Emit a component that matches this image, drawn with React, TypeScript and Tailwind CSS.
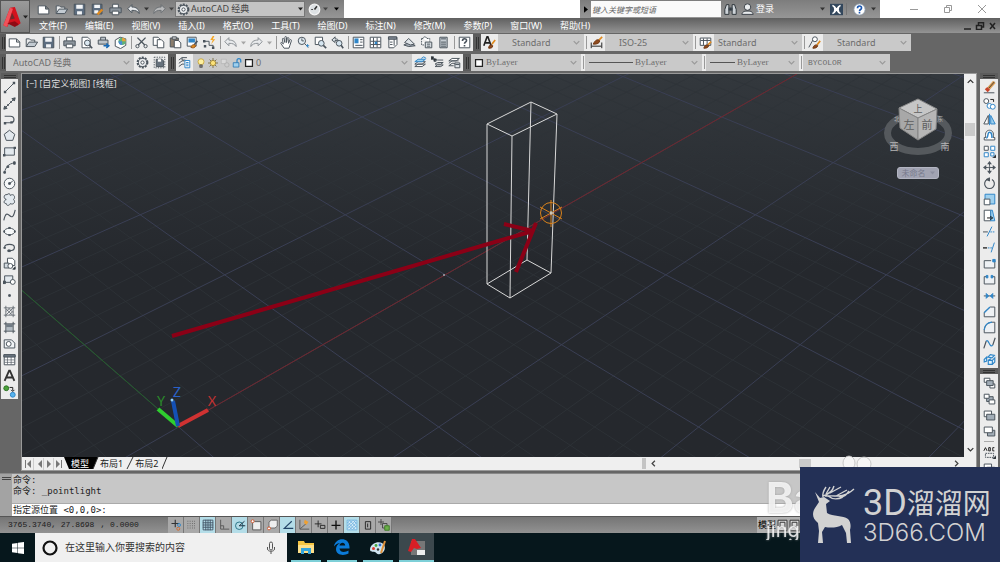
import classNames from "clsx";
import type { ReactNode } from "react";

const K = "#4b545d";
const B = "#2f86c8";
const L = "#9fd0ee";
const O = "#e08a1e";

// All glyphs are drawn on a 16 x 16 box
const glyphs: Record<string, ReactNode> = {
  new: <path d="M1.500 3.500h9l4 4v6h-13zM10.500 3.500v4h4" fill="#fff" />,
  open: (
    <>
      <path d="M1.500 13V3.500h4l1.500 1.500h5v3" fill="#e8eaec" />
      <path d="M1.500 13l3.500-5.500h10.500L12 13z" fill="#c3cbd2" />
    </>
  ),
  save: (
    <>
      <path d="M1.500 1.500h13v13h-13z" fill="#5c6d80" />
      <path d="M4 2h8v5H4zM5 10h6v4H5z" fill="#f3f5f7" stroke="none" />
    </>
  ),
  saveas: (
    <>
      <path d="M1.500 1.500h12v12h-12z" fill="#5c6d80" />
      <path d="M4 2h7v4H4zM4 9h5v4H4z" fill="#f3f5f7" stroke="none" />
      <path d="M8 14l6-6" stroke={O} strokeWidth="3" />
    </>
  ),
  print: (
    <>
      <path d="M4.500 6V1.500h7V6" fill="#fff" />
      <path d="M1 6h14v6H1z" fill="#8c959d" />
      <path d="M4 10h8v4.500H4z" fill="#fff" />
    </>
  ),
  preview: (
    <>
      <path d="M2.500 1.500h7l3 3v10h-10z" fill="#fff" />
      <circle cx="9" cy="8.500" r="3.500" fill="#dce9f2" />
      <path d="M11.500 11l3.500 4" strokeWidth="2" />
    </>
  ),
  publish: (
    <>
      <path d="M4.500 5V1.500h6V5M1.500 5h12v5h-12z" fill="#bcc3c9" />
      <path d="M8 12h5M11.500 9.500l3 2.500-3 2.500" stroke="#1668b4" strokeWidth="2" />
    </>
  ),
  cube3d: (
    <>
      <path d="M1.500 5l6-3.500 7 2v8l-6.500 4-6.500-3z" fill="#fff" />
      <circle cx="10" cy="6.500" r="4.500" fill="#5fb37a" stroke="none" />
      <path d="M10 6.500V2a4.500 4.500 0 0 1 4.500 4.500z" fill="#e7a13b" stroke="none" />
      <path d="M10 6.500H5.500A4.500 4.500 0 0 0 10 11z" fill="#4b8bd6" stroke="none" />
    </>
  ),
  cut: (
    <>
      <path d="M3 2l9 9M13 2L4 11" strokeWidth="1.600" />
      <circle cx="3" cy="12.500" r="2" />
      <circle cx="13" cy="12.500" r="2" />
    </>
  ),
  copy: (
    <>
      <path d="M1.500 1.500h6l2 2v8h-8z" fill="#fff" />
      <path d="M6.500 4.500h5l3 3v7h-8z" fill="#fff" />
    </>
  ),
  paste: (
    <>
      <path d="M1.500 2.500h10v11h-10z" fill="#8a7d6d" />
      <path d="M4 1h5v3H4z" fill="#ccc" />
      <path d="M6.500 5.500h5l3 3v6h-8z" fill="#fff" />
    </>
  ),
  match: (
    <>
      <path d="M1.500 1.500h11v11h-11z" fill="#fff" />
      <path d="M3 3h8v5H3z" fill={B} stroke="none" />
      <path d="M14 6l-4 5" stroke={K} strokeWidth="2" />
      <path d="M6 14c1-4 5-4 6-2-1 3-4 3-6 2z" fill={O} stroke="#94541a" />
    </>
  ),
  block: (
    <>
      <path d="M1.500 6.500h6v5h5v3" />
      <path d="M12 0l-3 5h3l-2 5 5-6h-3l2-4z" fill="#f5a623" stroke="none" />
      <path d="M0 5h3v3H0zM1 11h3v3H1zM11 13h3v3h-3z" fill={K} stroke="none" />
    </>
  ),
  undo: <path d="M1 7l5-5v3c5 0 9 2 9 8-2-3-4-4-9-4v3z" fill="#e6e9ec" />,
  redo: <path d="M15 7l-5-5v3c-5 0-9 2-9 8 2-3 4-4 9-4v3z" fill="#e6e9ec" />,
  pan: (
    <path
      d="M5 15L1 9c0-2 2-1 3 1L3 4c0-2 2-1 2 0l1 4V2c0-2 2-2 2 0v6l1-5c0-2 2-1 2 0l-.5 6L12 5c1-1 2-1 2 1l-2 6-1 3z"
      fill="#fff"
    />
  ),
  zoom: (
    <>
      <circle cx="6" cy="6" r="4.500" fill="#e4edf3" />
      <path d="M6 3v3h2.500M9.500 9.500L14 14" />
      <path d="M11 12h4M13 10v4" stroke={B} />
    </>
  ),
  zoomwin: (
    <>
      <path d="M1.500 1.500h9v9h-9z" fill="#fff" />
      <circle cx="9" cy="9" r="3.500" fill="#d5e5f0" />
      <path d="M11.500 11.500L15 15" strokeWidth="2" />
    </>
  ),
  zoomprev: (
    <>
      <path d="M1 5l4-4v2.500c3 0 4 1 5 3-2-1-3-1-5-1V8z" fill="#dce3e8" />
      <circle cx="10" cy="9" r="3.500" fill="#d5e5f0" />
      <path d="M12.500 11.500L15 15" strokeWidth="2" />
    </>
  ),
  props: (
    <>
      <path d="M1.500 1.500h13v13h-13z" fill="#fff" />
      <path d="M3 3h5v6H3z" fill={B} stroke="none" />
      <path d="M10 4.500h3M10 7.500h3M4 11.500h9" />
    </>
  ),
  dcenter: (
    <>
      <path d="M1.500 1.500h13v13h-13zM5.500 2v12M2 6.500h12M2 10.500h12M10 2v12" fill="#fff" />
      <path d="M7 7h3v3H7z" fill={B} stroke="none" />
    </>
  ),
  palette: (
    <>
      <path d="M3.500 1.500h10v9l-4 4h-6z" fill="#fff" />
      <path d="M3 1h10v3H3zM10 4v8M5 7.500h3M5 10.500h3" fill="#808a94" />
    </>
  ),
  sheet: (
    <>
      <path d="M1 11l6 2 8-1-7-4z" fill="#a9b2ba" />
      <path d="M2 8L7 3l7 7-5 1z" fill="#dfe4e8" />
    </>
  ),
  markup: (
    <>
      <path d="M2 3h2l1-2h2l1 2h4v4M2 3v8h4" fill="#fff" strokeDasharray="2 1" />
      <path d="M6.500 7.500h8v7h-8zM8.500 10h4M8.500 12.500h4" fill="#dfe4e8" />
    </>
  ),
  calc: (
    <>
      <path d="M3.500 1.500h9v13h-9z" fill="#c5ccd2" />
      <path d="M5 3.500h6M5 7.500h6M5 10h6M5 12.500h6" />
    </>
  ),
  help: (
    <>
      <path d="M1.500 1.500h13v13h-13z" fill="#fff" />
      <path d="M5.500 6c0-3.500 5-3.500 5-.5 0 2-2.500 2-2.500 4M8 11v2" strokeWidth="2" />
    </>
  ),
  textstyle: (
    <>
      <path d="M1 12L5 1h1l4 11M2.500 8.500h6" strokeWidth="2" stroke="#222" />
      <path d="M15 5l-4 5" strokeWidth="2" stroke={O} />
      <path d="M7 15c0-4 3-5 5-3 0 3-3 3-5 3z" fill="#8f4a1d" stroke="#703814" />
    </>
  ),
  dimstyle: (
    <>
      <path d="M1.500 8v7M14.500 8v7M2 12.500h12" stroke="#222" />
      <path d="M15 1l-4 4" strokeWidth="2" stroke={O} />
      <path d="M4 10c2-5 6-7 8-4-1 4-5 4-8 4z" fill="#8f4a1d" stroke="#703814" />
    </>
  ),
  tablestyle: (
    <>
      <path d="M1.500 2.500h13v9h-13zM2 5.500h12M5.500 3v8M10 3v8" fill="#fff" />
      <path d="M15 7l-4 4" strokeWidth="2" stroke={O} />
      <path d="M6 15c1-4 4-5 6-3-1 3-4 3-6 3z" fill="#8f4a1d" stroke="#703814" />
    </>
  ),
  leader: (
    <>
      <path d="M1 14L6 5" />
      <circle cx="8.500" cy="4" r="3" fill="#fff" />
      <path d="M15 6l-4 5" strokeWidth="2" stroke={O} />
      <path d="M6 15c1-4 4-5 6-3-1 3-4 3-6 3z" fill="#8f4a1d" stroke="#703814" />
    </>
  ),
  gear: (
    <>
      <circle cx="8" cy="8" r="6" strokeDasharray="2.500 1.300" strokeWidth="2.500" />
      <circle cx="8" cy="8" r="5" fill="#eef0f2" />
      <circle cx="8" cy="8" r="2" fill="#fff" />
    </>
  ),
  wsave: (
    <>
      <path d="M1.500 1.500h13v13h-13z" strokeDasharray="1.500 1.500" />
      <path d="M4 4h7l2 2v7H4z" fill="#66717c" />
      <path d="M6 4h4v3H6z" fill="#fff" stroke="none" />
    </>
  ),
  layers: (
    <>
      <path d="M1 5l4-3h6M1 9l4-3h3M1 13l4-3h3M5 2v3h4" />
      <path d="M8.500 5.500h6v9h-6zM10 8h3M10 10h3M10 12h3" fill="#fff" stroke={B} />
    </>
  ),
  stack: (
    <>
      <path d="M1 13l4-3h9l-4 3zM1 10l4-3h9l-4 3z" fill="#fff" />
      <path d="M1 7l4-3h9l-4 3z" fill={L} stroke={B} />
      <path d="M9 3l3-2 3 2" stroke={B} />
    </>
  ),
  laymatch: (
    <>
      <path d="M5 13l3-2h7l-3 2zM5 10l3-2h7l-3 2zM5 7l3-2h7" fill="#fff" />
      <path d="M0 1h3v3H0zM3 3l4 1-3 3z" fill="#222" />
    </>
  ),
  laystate: (
    <>
      <path d="M1 12l4-3h4M1 9l4-3h8M1 6l4-3h9l-4 3zM1 12h6" fill="#fff" />
      <path d="M8.500 8.500h6v6h-6zM9 10.500h5" fill="#dfe4e8" />
    </>
  ),
  bulb: (
    <>
      <circle cx="8" cy="6" r="4.800" fill="#fdf0a0" stroke="#c29b2a" />
      <path d="M6 11h4v4H6z" fill="#777" stroke="#555" />
    </>
  ),
  sun: (
    <>
      <path d="M8 0v16M0 8h16M2.500 2.500l11 11M13.500 2.500l-11 11" stroke="#6a5b2c" />
      <circle cx="8" cy="8" r="4.200" fill="#fbe27a" stroke="#9b7e26" />
    </>
  ),
  freeze: (
    <>
      <path d="M2 2h8v7H2z" fill="#d9d9d9" stroke="#b3b3b3" />
      <circle cx="11" cy="11" r="3.500" fill="#ccc" stroke="#aaa" />
    </>
  ),
  lock: (
    <>
      <path d="M8 8V4c0-4 6-4 6 0v3" strokeWidth="2" stroke={B} />
      <path d="M2 7.500h9v7H2z" fill={L} stroke="#1f6fae" />
    </>
  ),
  swatch: <path d="M2.500 2.500h11v11h-11z" fill="#fff" stroke="#222" strokeWidth="2" />,
  line: (
    <>
      <path d="M2.500 13.500l11-11" />
      <path d="M1 12h3v3H1zM12 1h3v3h-3z" fill={K} stroke="none" />
    </>
  ),
  xline: (
    <>
      <path d="M2 14L14 2" />
      <path d="M15 1l-4 1 3 3zM1 15l4-1-3-3z" fill={K} />
      <path d="M5 9h2v2H5zM9 5h2v2H9z" fill={K} stroke="none" />
    </>
  ),
  pline: (
    <>
      <path d="M2 4h7c6 0 6 8 0 8H2" strokeWidth="1.500" />
      <path d="M1 11h3v3H1zM9 10h3v3H9z" fill={K} stroke="none" />
    </>
  ),
  polygon: <path d="M8 1.500l6.500 5-2.500 7.500H4L1.500 6.500z" fill="#e3e9ee" />,
  rect: (
    <>
      <path d="M2 3.500h12v9H2z" fill="#e3e9ee" />
      <path d="M0 11h3v3H0zM13 2h3v3h-3z" fill={K} stroke="none" />
    </>
  ),
  arc: (
    <>
      <path d="M2 14C3 8 7 3 14 2.500" />
      <path d="M1 13h2v2H1zM5 6h2v2H5zM13 1h2v3h-2z" fill={K} />
    </>
  ),
  circle: (
    <>
      <circle cx="8" cy="8" r="6.500" fill="#f6f8f9" />
      <path d="M8 8l4-3" />
      <path d="M7 7h2v2H7z" fill={K} />
    </>
  ),
  cloud: (
    <path
      d="M4 8C0 7 1 1 5 2c2-2 4-1 4 1 4-3 7 2 4 5 3 3 0 7-4 5-1 3-5 3-5 0-4 0-3-4 0-5z"
      fill="#e3e9ee"
    />
  ),
  spline: <path d="M1 14c2-9 4-9 7-6s5 2 7-7" strokeWidth="1.400" />,
  ellipse: (
    <>
      <ellipse cx="8" cy="8" rx="6.500" ry="4" fill="#f6f8f9" />
      <path d="M1 7h1v2H1zM14 7h1v2h-1zM7 3h2v1H7zM7 12h2v1H7z" fill={K} />
    </>
  ),
  earc: (
    <>
      <path d="M2 8c0-5 12-5 12 0 0 3-3 4-6 4" strokeWidth="1.500" />
      <path d="M1 8h2v1H1zM6 11h3v2H6z" fill={K} />
    </>
  ),
  insert: (
    <>
      <path d="M5.500 1.500h6l3 3v6h-9z" fill="#fff" />
      <path d="M1.500 7.500h6v6h-6z" fill="#d5dce2" />
      <circle cx="9" cy="11" r="3" fill="#fff" />
      <path d="M12 15h3v-3z" fill="#111" />
    </>
  ),
  mkblock: (
    <>
      <path d="M2 3.500h10v8H2z" fill="#e3e9ee" />
      <path d="M0 10h3v3H0z" fill={K} />
      <circle cx="12" cy="11" r="3" fill="#fff" />
    </>
  ),
  point: <path d="M7 7h2v2H7z" fill={K} />,
  hatch: (
    <path
      d="M3.500 1v14M12.500 1v14M1 3.500h14M1 12.500h14M4 8l4-4M4 12l8-8M8 12l4-4M4 5l7 7M7 4l5 5"
      strokeWidth="0.900"
    />
  ),
  gradient: (
    <>
      <path d="M4 4h8v4H4z" fill="#707b85" stroke="none" />
      <path d="M4 8h8v4H4z" fill="#b3bcc4" stroke="none" />
      <path d="M3.500 1v14M12.500 1v14M1 3.500h14M1 12.500h14" />
    </>
  ),
  region: (
    <>
      <path d="M1.500 3.500h9l4 4v6h-13z" fill="#f1f4f6" />
      <circle cx="7" cy="8.500" r="3" fill="#fff" />
    </>
  ),
  table: (
    <>
      <path d="M1.500 2.500h13v12h-13z" fill="#fff" />
      <path d="M1 2h14v3H1z" fill="#6b7680" />
      <path d="M2 8.500h12M2 11.500h12M5.500 5v9M10 5v9" strokeWidth="0.800" />
    </>
  ),
  mtext: <path d="M2 14.500L7.500 2h1L14 14.500M4 10.500h8" strokeWidth="2.300" stroke="#333" />,
  addsel: (
    <>
      <circle cx="4" cy="4" r="3" fill="#4ba23b" stroke="#2f7425" />
      <circle cx="12" cy="12" r="3" fill="#58b4ee" stroke={B} />
      <path d="M8 3h4v4M10 6l2 2 2-2" stroke="#222" />
    </>
  ),
  erase: (
    <>
      <path d="M14 1L7 9" strokeWidth="4" stroke="#d99c53" />
      <path d="M14 1L7 9" strokeWidth="1" stroke="#333" />
      <path d="M7 9l-3 3" strokeWidth="5" stroke="#c8432a" />
      <path d="M1 14.500h13" />
    </>
  ),
  copyobj: (
    <>
      <circle cx="4" cy="5" r="3" fill="#fff" />
      <path d="M9 3h4v3" stroke="#222" />
      <circle cx="8" cy="11" r="3" stroke={B} fill="#fff" />
      <circle cx="12" cy="12" r="3" stroke={B} fill="#fff" />
    </>
  ),
  mirror: (
    <>
      <path d="M1 13.500L6.500 3v10.500z" fill="#fff" />
      <path d="M8 1v14" stroke={B} />
      <path d="M15 13.500L9.500 3v10.500z" fill={L} stroke={B} />
    </>
  ),
  offset: (
    <>
      <path d="M1.500 13.500v-3h2C2 4 5 1.500 8 1.500S14 4 12.500 10.500h2v3z" fill="#fff" />
      <path d="M4 11c3 0 1-7 4-7s3 3 3 7" stroke={B} strokeWidth="1.800" />
    </>
  ),
  array: (
    <>
      <path d="M1.500 1.500h5v5h-5z" fill="#fff" />
      <path d="M9.500 1.500h5v5h-5zM1.500 9.500h5v5h-5zM9.500 9.500h4v4h-4z" fill="#fff" stroke={B} />
      <path d="M12 16h4v-4z" fill="#111" />
    </>
  ),
  move: (
    <>
      <path d="M8 2v12M2 8h12" strokeDasharray="4 3" />
      <path d="M8 0l3 4H5zM8 16l3-4H5zM0 8l4-3v6zM16 8l-4-3v6z" fill={K} stroke="none" />
      <circle cx="8" cy="8" r="1" fill={K} />
    </>
  ),
  rotate: (
    <>
      <path d="M5 3a6 6 0 1 0 6 0" strokeWidth="1.400" />
      <path d="M4 3l4-2v4z" fill={K} />
    </>
  ),
  scale: (
    <>
      <path d="M2.500 1.500h12v12h-12z" fill={L} stroke={B} />
      <path d="M1.500 7.500h7v7h-7z" fill="#fff" />
    </>
  ),
  stretch: (
    <>
      <path d="M1.500 1.500h8v13h-8z" fill="#fff" />
      <path d="M9.500 1.500h2l3 13h-5z" fill={L} stroke={B} />
      <path d="M5 11h5M9 9l3 2-3 2" stroke="#111" />
    </>
  ),
  trim: (
    <>
      <path d="M5 14L11 2" stroke={B} />
      <path d="M0 8.500h6" />
      <path d="M9 8.500h6" stroke={B} strokeDasharray="2 1" />
    </>
  ),
  extend: (
    <>
      <path d="M10 14l4-12" stroke={B} />
      <path d="M0 8.500h5" stroke="#111" strokeWidth="1.500" />
      <path d="M6 8.500h6" stroke={B} strokeDasharray="2 1" />
    </>
  ),
  breakpt: (
    <>
      <path d="M14.500 5v8.500h-13v-9H10" fill="#eef1f4" />
      <path d="M12 3h3v3h-3z" fill={B} stroke={B} />
    </>
  ),
  breakln: (
    <>
      <path d="M5 4.500H1.500v9h13v-9H11" fill="#eef1f4" />
      <path d="M4 3h2v3H4zM10 3h2v3h-2z" fill={B} stroke={B} />
    </>
  ),
  join: (
    <>
      <path d="M1 8.500h14" />
      <path d="M4 5.500l3 3-3 3zM12 5.500l-3 3 3 3z" fill={B} stroke={B} />
    </>
  ),
  chamfer: (
    <>
      <path d="M1.500 9v5.500h13v-12H9z" fill="#eef1f4" />
      <path d="M1.500 9.500l7-7" stroke={B} strokeWidth="1.500" />
    </>
  ),
  fillet: (
    <>
      <path d="M1.500 11v3.500h13v-13H11C5 2 2 6 1.500 11z" fill="#eef1f4" />
      <path d="M1.500 11c.5-5 4-9 9.500-9.500" stroke={B} strokeWidth="1.500" />
    </>
  ),
  blend: (
    <>
      <path d="M1 14l3-9M12 10l3-9" strokeWidth="1.500" />
      <path d="M4 5c3-3 4 9 8 5" stroke={B} strokeWidth="1.500" />
    </>
  ),
  explode: (
    <path
      d="M1.500 8l3-3v5l-3 1zM6 5l3-3 5 1-3 3zM6.500 9h5v5h-5zM11.500 9l3-3v5l-3 3M6.500 9l3-2"
      fill="#e4f2fb"
      stroke={B}
      strokeWidth="1.400"
    />
  ),
  front: (
    <>
      <path d="M1.500 1.500h7v5h-7zM8.500 8.500h6v5h-6z" fill="#fff" />
      <path d="M4.500 4.500h8v6h-8z" fill="#a2adb7" />
    </>
  ),
  back: (
    <>
      <path d="M4.500 4.500h8v6h-8z" fill="#a2adb7" />
      <path d="M1.500 1.500h6v5h-6zM7.500 8.500h7v5h-7z" fill="#fff" />
    </>
  ),
  above: (
    <>
      <path d="M1.500 2.500h9v7h-9z" fill="#fff" />
      <path d="M4.500 6.500h10v7h-10z" fill="#a2adb7" />
    </>
  ),
  under: (
    <>
      <path d="M5.500 6.500h9v7h-9z" fill="#a2adb7" />
      <path d="M1.500 2.500h10v7h-10z" fill="#fff" />
    </>
  ),
  annofront: (
    <>
      <path d="M1 6l2-4 2 4M7 2v4M7 2h2v4H7M14 2h-2v4h2" stroke="#222" />
      <path d="M3 9h10v5H3z" strokeDasharray="2 1" />
      <path d="M12 16h4v-4z" fill="#111" />
    </>
  ),
  wheel: (
    <>
      <circle cx="8" cy="8" r="6.500" fill="#dde1e4" stroke="#f4f4f4" strokeWidth="1.500" />
      <path d="M8 8l3-4" stroke="#333" strokeWidth="2" />
      <path d="M4 8h2" stroke="#333" />
    </>
  ),
  binoculars: (
    <>
      <path d="M1 8l2-6h3v12H1zM15 8l-2-6h-3v12h5z" fill="#cdd3d8" stroke="#2e353b" />
      <path d="M6 6h4v3H6z" fill="#2e353b" />
    </>
  ),
  user: (
    <>
      <circle cx="8" cy="5" r="4" fill="#e9ecee" stroke="#3a4047" />
      <path d="M1 14c1-4 4-4 7-4s6 0 7 4z" fill="#e9ecee" stroke="#3a4047" />
    </>
  ),
  exchange: (
    <>
      <path d="M0 1h16v14H0z" fill="#33475c" stroke="none" />
      <path d="M3 3c4 2 4 8 0 10M13 3c-4 2-4 8 0 10M5 4l6 8M11 4l-6 8" stroke="#fff" strokeWidth="1.800" />
    </>
  ),
  question: (
    <>
      <circle cx="8" cy="8" r="7" fill="#fff" stroke="#8996a5" />
      <path d="M5.500 6.500c0-4 5-3.500 5-.5 0 2-2.500 2-2.500 4M8 11v2" stroke="#1b57b0" strokeWidth="2" />
    </>
  ),
  infer: (
    <>
      <path d="M7 1v10M2 6h10" stroke="#333" strokeWidth="1.500" />
      <circle cx="12" cy="8" r="2" stroke={B} />
      <circle cx="11" cy="13" r="2" stroke="#d06a2c" />
    </>
  ),
  snap: <path d="M2 3h12M2 6h12M2 9h12M2 12h12" stroke="#555" strokeDasharray="1 2" />,
  grid: <path d="M1.500 1.500h13v13h-13zM1 5h14M1 8h14M1 11h14M5 1v14M8 1v14M11 1v14" stroke="#456" />,
  ortho: <path d="M3.500 1v12.500H15M3.500 9h4v4" stroke="#555" />,
  polar: (
    <>
      <circle cx="7" cy="9" r="5" stroke="#1f6d80" />
      <path d="M7 9l7-6M7 9h8" stroke="#123" />
    </>
  ),
  osnap: (
    <>
      <path d="M3.500 3.500h11v11h-11z" fill="#eee" stroke="#555" />
      <circle cx="3.500" cy="3" r="2" fill="#fff" stroke="#d0562c" />
    </>
  ),
  osnap3d: (
    <>
      <path d="M4 4l3-2.500h8v8L12 12H4z" fill="#eee" stroke="#666" />
      <circle cx="4" cy="12.500" r="2" fill="#fff" stroke="#d0562c" />
    </>
  ),
  otrack: <path d="M13 3L3 12.500h12" stroke="#246" strokeWidth="1.500" />,
  ducs: (
    <>
      <path d="M2.500 1v12.500H15M3 13l8-7" stroke="#555" />
      <path d="M9 1l5 3-3 4-3-3z" fill="#f0a030" stroke="none" />
    </>
  ),
  dyn: <path d="M1 6.500h9M5.500 2v9M8.500 8.500h6v4h-6z" stroke="#222" />,
  lwt: <path d="M8 2v12M2 8.500h12" stroke="#111" strokeWidth="1.800" />,
  tpy: (
    <path
      d="M1.500 1.500h13v13h-13zM2 5l3-3M2 9l7-7M2 13l11-11M5 14l9-9M9 14l5-5M2 8l6 6M2 4l10 10M5 2l9 9M10 2l4 4"
      stroke="#6fb2df"
      fill="#d9edf8"
    />
  ),
  qp: <path d="M4.500 3.500h7v10h-7zM7.500 6v5" stroke="#222" />,
  sc: (
    <>
      <path d="M4 0v8M0 4h8M6 6h6v6H6z" stroke="#444" />
      <path d="M9 9h6v6H9z" fill="#6cb04a" stroke="#3d7a25" />
    </>
  ),
  layout: <path d="M2.500 1.500h11v13h-11zM5 4h6v6H5z" fill="#ddd" stroke="#333" />,
};

function Glyph({ name, className = "size-[13px]" }: { name: string; className?: string }) {
  return (
    <svg
      viewBox="0 0 16 16"
      className={classNames("shrink-0", className)}
      fill="none"
      stroke={K}
      strokeWidth="1.200"
      aria-hidden="true"
    >
      {glyphs[name]}
    </svg>
  );
}

function ToolButton({ name, className = "h-full w-[17px]" }: { name: string; className?: string }) {
  return (
    <button
      type="button"
      aria-label={name}
      className={classNames("flex shrink-0 items-center justify-center", className)}
    >
      <Glyph name={name} />
    </button>
  );
}

function Drop({ className = "text-[#222]" }: { className?: string }) {
  return (
    <svg viewBox="0 0 8 5" className={classNames("h-1 w-[5px] shrink-0", className)} aria-hidden="true">
      <path d="M0 0h8L4 5z" fill="currentColor" />
    </svg>
  );
}

function Chevron({ dir = "down", className = "text-[#9a9a9a]" }: { dir?: "down" | "up" | "left" | "right"; className?: string }) {
  const shapes = {
    down: "M1 3l4 4 4-4",
    up: "M1 7l4-4 4 4",
    left: "M7 1L3 5l4 4",
    right: "M3 1l4 4-4 4",
  };
  return (
    <svg viewBox="0 0 10 10" className={classNames("size-[7px] shrink-0", className)} aria-hidden="true">
      <path d={shapes[dir]} fill="none" stroke="currentColor" strokeWidth="1.800" />
    </svg>
  );
}

interface ComboProps {
  label: string;
  value: string;
  className: string;
  textClass?: string;
  children?: ReactNode;
}

function Combo({ label, value, className, textClass = "text-[9px]", children }: ComboProps) {
  return (
    <div className={classNames("flex h-full items-center gap-[2px] bg-[#c9c9c9] pr-1 text-[#6c6c6c]", className)}>
      {children}
      <select aria-label={label} className={classNames("h-full min-w-0 flex-1 appearance-none bg-transparent", textClass)}>
        <option>{value}</option>
      </select>
      <Chevron />
    </div>
  );
}

function Grip({ className = "w-[6px]" }: { className?: string }) {
  return (
    <div className={classNames("flex h-full shrink-0 items-center justify-center gap-px bg-[#5c5c5c]", className)}>
      <span className="h-3 w-px bg-[#333]" />
      <span className="h-3 w-px bg-[#333]" />
    </div>
  );
}

function Divider() {
  return (
    <div className="flex h-full w-1 shrink-0 items-center justify-center">
      <span className="h-[13px] w-px bg-[#999]" />
    </div>
  );
}

function DropCell() {
  return (
    <span className="flex w-[9px] justify-center">
      <Drop className="text-[#777]" />
    </span>
  );
}

const menus = [
  "文件(F)", "编辑(E)", "视图(V)", "插入(I)", "格式(O)", "工具(T)",
  "绘图(D)", "标注(N)", "修改(M)", "参数(P)", "窗口(W)", "帮助(H)",
];

function TitleBar() {
  return (
    <header className="flex">
      <button
        type="button"
        aria-label="菜单浏览器"
        className="flex w-[30px] shrink-0 items-center gap-px border border-[#555] bg-linear-to-b from-[#9a9a9a] to-[#7b7b7b] pl-px"
      >
        <svg viewBox="0 0 20 26" className="h-[25px] w-5" aria-hidden="true">
          <path d="M1 22L8 4l5-1 6 17-4 3-2-4-6 1-2 4z" fill="#d3121d" />
          <path d="M1 22L8 4l3 1-5 15-1 4z" fill="#f0525a" />
          <path d="M10 9l3 6-5 1z" fill="#6b2a2a" />
          <path d="M5 20l8-2 4 3-4 3z" fill="#8e0b14" />
        </svg>
        <Drop />
      </button>
      <div className="flex min-w-0 flex-1 flex-col">
        <div className="flex h-[18px] bg-white">
          <div className="flex items-center bg-linear-to-b from-[#7d7d7d] to-[#969696] pl-1">
            {["new", "open", "save", "saveas", "print", "undo"].map((name) => (
              <ToolButton key={name} name={name} className="h-full w-[18px]" />
            ))}
            <span className="flex w-2 justify-center">
              <Drop className="text-[#333]" />
            </span>
            <span className="flex opacity-50">
              <ToolButton name="redo" className="h-full w-[18px]" />
            </span>
            <span className="flex w-[7px] justify-center">
              <Drop className="text-[#444]" />
            </span>
            <div className="flex h-4 w-[130px] items-center gap-px border border-[#777] bg-[#c4c4c4] px-px">
              <Glyph name="gear" />
              <select aria-label="工作空间" className="min-w-0 flex-1 appearance-none bg-transparent text-[9px] text-[#444]">
                <option>AutoCAD 经典</option>
              </select>
              <Drop />
            </div>
            <ToolButton name="wheel" className="h-full w-[18px]" />
            <Drop className="text-[#444]" />
            <span className="flex w-4 justify-center">
              <Drop className="text-black" />
            </span>
          </div>
          <div className="flex-1" />
          <div className="flex items-center bg-linear-to-b from-[#7d7d7d] to-[#969696]">
            <span className="flex w-[11px] justify-center">
              <svg viewBox="0 0 5 8" className="h-[7px] w-1" aria-hidden="true">
                <path d="M0 0v8l5-4z" />
              </svg>
            </span>
            <input
              aria-label="搜索"
              placeholder="键入关键字或短语"
              className="h-4 w-[130px] bg-[#fafafa] px-px text-[8px] italic placeholder:text-[#666]"
            />
            <ToolButton name="binoculars" className="h-full w-[18px]" />
            <ToolButton name="user" className="h-full w-[17px]" />
            <a href="#login" className="w-[62px] text-[9px] text-white">登录</a>
            <span className="flex w-2 justify-center">
              <Drop className="text-[#333]" />
            </span>
            <ToolButton name="exchange" className="h-full w-5" />
            <span className="h-3 w-px bg-[#777]" />
            <ToolButton name="question" className="h-full w-6" />
            <span className="flex w-[9px]">
              <Drop className="text-[#333]" />
            </span>
          </div>
          <div className="flex w-[120px] items-center justify-between pr-[14px] pl-[30px] text-[#999]">
            <button type="button" aria-label="最小化">
              <svg viewBox="0 0 8 8" className="size-2" fill="none" stroke="currentColor">
                <path d="M0 4.500h8" />
              </svg>
            </button>
            <button type="button" aria-label="还原">
              <svg viewBox="0 0 8 8" className="size-2" fill="none" stroke="currentColor">
                <path d="M.5 2.500h5v5h-5zM2.500 2V.5h5v5H6" />
              </svg>
            </button>
            <button type="button" aria-label="关闭">
              <svg viewBox="0 0 8 8" className="size-2" fill="none" stroke="currentColor">
                <path d="M0 0l8 8M8 0L0 8" />
              </svg>
            </button>
          </div>
        </div>
        <nav className="flex h-[15px] items-center justify-between bg-linear-to-b from-[#606060] to-[#949494] pr-1 pl-[9px]">
          <div className="flex gap-[18px] text-[9px] leading-[15px] text-white">
            {menus.map((menu) => (
              <button key={menu} type="button" className="whitespace-nowrap">
                {menu}
              </button>
            ))}
          </div>
          <svg viewBox="0 0 32 8" className="h-2 w-8" fill="none" stroke="#222" strokeWidth="1.500" aria-hidden="true">
            <path d="M0 7h7M12.500 3.500h5v4h-5zM14.500 3V.7h5v4.300H18M26 1l5 6M31 1l-5 6" />
          </svg>
        </nav>
      </div>
    </header>
  );
}

function StandardToolbar() {
  return (
    <div className="flex h-[17px] w-fit bg-[#ececec]">
      <Grip />
      {["new", "open", "save"].map((n) => <ToolButton key={n} name={n} />)}
      <Divider />
      {["print", "preview", "publish", "cube3d"].map((n) => <ToolButton key={n} name={n} />)}
      <Divider />
      {["cut", "copy", "paste", "match", "block"].map((n) => <ToolButton key={n} name={n} />)}
      <Divider />
      <div className="flex items-center opacity-60">
        <ToolButton name="undo" />
        <DropCell />
        <ToolButton name="redo" />
        <DropCell />
      </div>
      <Divider />
      {["pan", "zoom", "zoomwin", "zoomprev"].map((n) => <ToolButton key={n} name={n} />)}
      <Divider />
      {["props", "dcenter", "palette", "sheet", "markup", "calc"].map((n) => <ToolButton key={n} name={n} />)}
      <Divider />
      <ToolButton name="help" />
      <Grip className="w-2" />
      <ToolButton name="textstyle" />
      <Combo label="文字样式" value="Standard" className="w-[86px] pl-[14px]" />
      <Divider />
      <ToolButton name="dimstyle" />
      <Combo label="标注样式" value="ISO-25" className="w-[88px] pl-[14px]" />
      <Divider />
      <ToolButton name="tablestyle" />
      <Combo label="表格样式" value="Standard" className="w-[88px] pl-1" />
      <Divider />
      <ToolButton name="leader" />
      <Combo label="多重引线样式" value="Standard" className="w-[88px] pl-[14px]" />
    </div>
  );
}

function LayerToolbar() {
  const serif = "text-[9px] font-['Liberation_Serif','Noto_Sans_CJK_SC',serif]";
  return (
    <div className="flex h-[17px] w-fit bg-[#ececec]">
      <Grip />
      <Combo label="工作空间" value="AutoCAD 经典" className="w-[128px] pl-[7px]" />
      <ToolButton name="gear" />
      <ToolButton name="wsave" />
      <Grip className="w-2" />
      <ToolButton name="layers" />
      <Combo label="图层" value="0" className="w-[219px] pl-[3px]">
        {["bulb", "sun", "freeze", "lock", "swatch"].map((n) => (
          <Glyph key={n} name={n} className="size-[10px]" />
        ))}
      </Combo>
      {["stack", "laymatch", "laystate"].map((n) => <ToolButton key={n} name={n} />)}
      <Grip className="w-2" />
      <Combo label="颜色" value="ByLayer" className="w-[110px] pl-[3px]" textClass={serif}>
        <Glyph name="swatch" className="size-[10px]" />
      </Combo>
      <Divider />
      <Combo label="线型" value="ByLayer" className="w-[117px] pl-1" textClass={serif}>
        <span className="h-px w-[44px] bg-[#555]" />
      </Combo>
      <Divider />
      <Combo label="线宽" value="ByLayer" className="w-[93px] pl-1" textClass={serif}>
        <span className="h-px w-[25px] bg-[#555]" />
      </Combo>
      <Divider />
      <Combo
        label="打印样式"
        value="BYCOLOR"
        className="w-[87px] pl-[5px]"
        textClass="text-[8px] font-['Liberation_Mono',monospace]"
      />
    </div>
  );
}

const drawTools = [
  "line", "xline", "pline", "polygon", "rect", "arc", "circle", "cloud", "spline", "ellipse",
  "earc", "insert", "mkblock", "point", "hatch", "gradient", "region", "table", "mtext", "addsel",
];

const modifyTools = [
  "erase", "copyobj", "mirror", "offset", "array", "move", "rotate", "scale", "stretch",
  "trim", "extend", "breakpt", "breakln", "join", "chamfer", "fillet", "blend", "explode",
];

function SideGrip() {
  return (
    <div className="flex h-[6px] flex-col items-center justify-center gap-px bg-[#5c5c5c]">
      <span className="h-px w-3 bg-[#333]" />
      <span className="h-px w-3 bg-[#333]" />
    </div>
  );
}

// Ground plane seen in perspective: u runs along the red axis, v along the green one
function project(u: number, v: number) {
  const r = u + v;
  const s = u - v;
  const d = 1 + 0.0892 * r;
  const x = (262 + 68 * r + 214.5 * s) / d / 1.6505 + 20;
  const y = (1065 - 174 * r) / d / 3 + 72;
  return `${x.toFixed(1)} ${y.toFixed(1)}`;
}

function gridPath(major: boolean) {
  let d = "";
  for (let i = -40; i <= 50; i++) {
    if ((i % 5 === 0) !== major) continue;
    const n = i / 5;
    d += `M${project(n, -6 - n)}L${project(n, 12 - n)}`;
    d += `M${project(-6 - n, n)}L${project(12 - n, n)}`;
  }
  return d;
}

function Drawing() {
  return (
    <svg className="absolute inset-0 h-full w-full" fill="none" aria-label="模型空间">
      <g transform="translate(-22 -74)">
        <path d={gridPath(false)} stroke="#2f3338" strokeWidth="0.800" />
        <path d={gridPath(true)} stroke="#3a3f54" />
        <path d={`M${project(0, 0)}L${project(0, 4)}`} stroke="#245f28" />
        <path d={`M${project(0, 0)}L${project(8, 0)}`} stroke="#71262b" />
        <path
          d="M487 124L531 102L557 114L512 136ZM487 284L527 260L551 273L510 298ZM487 124V284M531 102L527 260M557 114L551 273M512 136L510 298"
          stroke="#d8d8d8"
        />
        <g stroke="#d9821c">
          <circle cx="551" cy="213" r="10.500" />
          <path d="M551 200v27M540 207l22 12M562 207l-22 12" />
        </g>
        <path d="M550 213h3M551 211v4M443 275h2" stroke="#cfe0e8" />
        <path d="M172 336L533 231M504 224L533 231M536 223L516 272" stroke="#8b0016" strokeWidth="4" />
        <path d="M178 426L208 410" stroke="#cf3232" strokeWidth="4" />
        <path d="M178 426L158 409" stroke="#2fce2f" strokeWidth="4" />
        <path d="M178 426L173 401" stroke="#1450b4" strokeWidth="4" />
        <circle cx="172" cy="400" r="1.500" fill="#8fd0ff" />
        <g fontSize="13" fontFamily="Lato, sans-serif" textAnchor="middle">
          <text x="212" y="406" fill="#c23232">X</text>
          <text x="161" y="406" fill="#2a8a2a">Y</text>
          <text x="177" y="397" fill="#2a62c8">Z</text>
        </g>
      </g>
    </svg>
  );
}

function ViewCube() {
  return (
    <div className="absolute top-[22px] right-[11px] flex w-[70px] flex-col items-center gap-[9px]">
      <svg viewBox="0 0 70 62" className="h-[62px] w-[70px]" aria-label="ViewCube">
        <ellipse cx="35" cy="37" rx="30.500" ry="18.500" fill="none" stroke="#55595d" strokeWidth="7" />
        <g fill="#b5b5b5" fontSize="9" textAnchor="middle">
          <text x="11" y="54">西</text>
          <text x="62" y="54">南</text>
          <text x="14" y="25" fontSize="6">北</text>
          <text x="57" y="25" fontSize="6">东</text>
        </g>
        <path d="M35 3L54 13L35 22L16 12Z" fill="#c6c6c6" stroke="#8a8a8a" />
        <path d="M16 12L35 22V44L17 32Z" fill="#a8a8a8" stroke="#858585" />
        <path d="M54 13L35 22V44L53 33Z" fill="#b6b6b6" stroke="#858585" />
        <g fill="#5e5e5e" textAnchor="middle">
          <text x="35" y="16" fontSize="9">上</text>
          <text x="26" y="33" fontSize="11">左</text>
          <text x="44" y="33" fontSize="11">前</text>
        </g>
      </svg>
      <button
        type="button"
        className="flex h-3 w-[42px] items-center justify-center gap-1 rounded-[3px] border border-[#b3b5c2] bg-[#a1a3b2] text-[8px] leading-none text-[#777a8c]"
      >
        未命名
        <Drop className="text-[#8c8fa0]" />
      </button>
    </div>
  );
}

function LayoutTabs() {
  return (
    <div className="flex h-[13px] items-center bg-[#efefef] text-[9px] leading-[13px] text-[#222]">
      <svg viewBox="0 0 42 12" className="h-3 w-[42px]" fill="#777" stroke="none" aria-hidden="true">
        <path d="M3 2h1v8H3zM9 2v8L5 6zM20 2v8l-4-4zM25 2v8l4-4zM34 2v8l4-4zM39 2h1v8h-1z" />
        <path d="M11 0h1v12h-1zM21 0h1v12h-1zM31 0h1v12h-1z" fill="#ccc" />
      </svg>
      <div className="relative flex h-full items-center">
        <svg viewBox="0 0 96 13" className="absolute inset-0 h-full w-24" aria-hidden="true">
          <path d="M0 0L5 12H29L34 0Z" fill="#000" />
          <path d="M29 12L34 0M63 12L69 0" stroke="#333" />
        </svg>
        <button type="button" className="relative pl-[7px] text-white">模型</button>
        <button type="button" className="relative pl-[11px]">布局1</button>
        <button type="button" className="relative pl-3">布局2</button>
        <svg viewBox="0 0 8 13" className="ml-1 h-[13px] w-2" fill="none" stroke="#333" aria-hidden="true">
          <path d="M0 12L5 0" />
        </svg>
      </div>
      <div className="flex-1" />
      <div className="flex h-full w-[35%] items-center">
        <span className="h-[11px] w-1 bg-[#c4c4c4]" />
        <Chevron dir="left" className="ml-1 text-[#444]" />
        <span className="flex-1" />
        <span className="h-[9px] w-3 bg-[#cacaca]" />
        <span className="flex-1" />
        <Chevron dir="right" className="mr-4 text-[#444]" />
      </div>
    </div>
  );
}

const statusTools = [
  { name: "infer" },
  { name: "snap" },
  { name: "grid", on: true },
  { name: "ortho" },
  { name: "polar", on: true },
  { name: "osnap" },
  { name: "osnap3d" },
  { name: "otrack", on: true },
  { name: "ducs" },
  { name: "dyn" },
  { name: "lwt" },
  { name: "tpy", on: true },
  { name: "qp" },
  { name: "sc" },
];

function StatusBar() {
  return (
    <div className="flex h-[17px] items-center border-t border-[#555] bg-linear-to-b from-[#757575] to-[#929292]">
      <p className="flex w-[168px] gap-[6px] pl-2 font-['Liberation_Mono',monospace] text-[8px] whitespace-nowrap text-[#1c1c1c]">
        <span>3765.3740, 27.8698</span>
        <span>, 0.0000</span>
      </p>
      {statusTools.map(({ name, on }) => (
        <button
          key={name}
          type="button"
          aria-label={name}
          className={classNames(
            "flex h-full w-4 items-center justify-center border-r border-[#777]",
            on ? "bg-[#b4dde8]" : "bg-[#a9a9a9]"
          )}
        >
          <Glyph name={name} className="size-3" />
        </button>
      ))}
      <div className="flex-1" />
      <div className="mr-[200px] flex h-full items-center bg-[#b0b0b0] pl-px text-[9px] text-black">
        模型
        <ToolButton name="layout" className="h-full w-3" />
        <ToolButton name="layout" className="h-full w-3" />
      </div>
    </div>
  );
}

function TaskBar() {
  return (
    <footer className="flex h-[29px] bg-[#06171c]">
      <button type="button" aria-label="开始" className="flex w-[35px] items-center justify-center">
        <svg viewBox="0 0 12 12" className="size-3" fill="#fff">
          <path d="M0 1.700l5.500-.8v4.800H0zM6 .8L12 0v5.700H6zM0 6.300h5.500v4.800L0 10.300zM6 6.300h6V12l-6-.8z" />
        </svg>
      </button>
      <div className="flex w-[252px] items-center gap-[7px] bg-[#f0f0f0] pr-[11px] pl-[7px]">
        <svg viewBox="0 0 16 16" className="size-4 shrink-0" fill="none" stroke="#111" strokeWidth="2.200">
          <circle cx="8" cy="8" r="6.500" />
        </svg>
        <input
          aria-label="搜索"
          placeholder="在这里输入你要搜索的内容"
          className="min-w-0 flex-1 bg-transparent text-[10px] placeholder:text-[#333]"
        />
        <svg viewBox="0 0 10 14" className="h-[14px] w-[10px]" fill="none" stroke="#555">
          <path d="M3.500 2.500a1.500 1.500 0 0 1 3 0v5a1.500 1.500 0 0 1-3 0zM1.500 6v2c0 3 7 3 7 0V6M5 10.500v2.500" />
        </svg>
      </div>
      <div className="flex items-stretch gap-[6px] pl-1">
        <button type="button" aria-label="文件资源管理器" className="flex w-[30px] items-center justify-center border-b-2 border-[#7ed0d8]">
          <svg viewBox="0 0 16 14" className="h-[14px] w-4">
            <path d="M0 1h6l1 2h9v10H0z" fill="#f4c542" />
            <path d="M0 5h16v8H0z" fill="#fde08a" />
            <path d="M3 14V8h10v6h-3v-3H6v3z" fill="#35a5dc" />
          </svg>
        </button>
        <button type="button" aria-label="Edge" className="flex w-[30px] items-center justify-center border-b-2 border-[#7ed0d8]">
          <svg viewBox="0 0 16 16" className="size-4">
            <path
              d="M0 7.500C1-1.500 15-3 15.500 8v1.500H5.500c.5 4.500 6 4 9 2v3C10 17 2 16.500 2 10c0-3 2-5 4-5.700C3.500 4 1.500 5.500 0 7.500zM5.500 6.500h5.700C11 2.500 6 3 5.500 6.500z"
              fill="#0b7bd8"
            />
          </svg>
        </button>
        <button type="button" aria-label="画图" className="flex w-[30px] items-center justify-center border-b-2 border-[#7ed0d8]">
          <svg viewBox="0 0 17 16" className="h-4 w-[17px]">
            <path d="M0 10c1-6 8-8 12-6 5 3 3 10-2 11-3 1-3-1-5-2s-5 1-5-3z" fill="#cfe4ef" />
            <circle cx="3.500" cy="9.500" r="1.500" fill="#e23b2e" />
            <circle cx="6" cy="6.500" r="1.400" fill="#4aa83d" />
            <circle cx="10" cy="6" r="1.400" fill="#2f6fd0" />
            <circle cx="8" cy="10.500" r="1.200" fill="#333" />
            <path d="M15 2L11 14" stroke="#e0913a" strokeWidth="2" />
          </svg>
        </button>
        <button type="button" aria-label="AutoCAD" className="flex w-[35px] items-center justify-center border-b-2 border-[#7ed0d8] bg-[#3c484d]">
          <svg viewBox="0 0 17 16" className="h-4 w-[17px]">
            <path d="M3 2h14v14H3z" fill="#777" />
            <path d="M9 11h8v5H9z" fill="#eee" />
            <path d="M0 12L4 0h3l6 9-4 1-3-1-3 4z" fill="#d81e26" />
          </svg>
        </button>
      </div>
    </footer>
  );
}

function Brand() {
  return (
    <div className="absolute right-0 bottom-0 flex h-[95px] w-[200px] items-center gap-[6px] bg-[#233056] pl-[11px] text-[#d2d2d2]">
      <svg viewBox="0 0 46 60" className="h-[60px] w-[46px] shrink-0" aria-hidden="true">
        <path
          d="M4 7L9 13L13 12L19 16L15 19L16 28C22 32 32 30 37 34C40 37 40 42 39 45L40 58H36L35 48L31 40C26 43 19 43 14 42L11 47L12 58H7L8 46L7 38C1 33 1 28 4 23L8 17Z"
          fill="currentColor"
        />
        <path
          d="M12 12C11 8 13 5 15 2M12 11C18 9 22 5 23 1M14 11C22 10 32 14 43 4M15 9L19 2M19 8L30 2M25 11L36 5M28 11C32 13 36 9 38 6M17 11C22 15 28 14 32 12"
          fill="none"
          stroke="currentColor"
          strokeWidth="1.400"
        />
      </svg>
      <div className="flex flex-col gap-1 whitespace-nowrap">
        <p className="flex items-center text-[28px] leading-8">
          <span className="font-['Roboto',sans-serif] text-[36px]">3D</span>
          溜溜网
        </p>
        <p className="font-['Inter',sans-serif] text-[24px] leading-5 font-light">3D66.COM</p>
      </div>
    </div>
  );
}

export default function App() {
  return (
    <div className="relative flex min-h-screen flex-col overflow-hidden bg-[#666] font-['Noto_Sans','Noto_Sans_CJK_SC',sans-serif]">
      <TitleBar />
      <div className="flex flex-col gap-[3px] pt-px">
        <StandardToolbar />
        <LayerToolbar />
      </div>
      <main className="flex min-h-0 flex-1 gap-[3px] pt-[2px] pr-[2px]">
        <aside className="ml-px w-[17px] self-start bg-[#ececec]">
          <SideGrip />
          {drawTools.map((name) => (
            <ToolButton key={name} name={name} className="h-4 w-full" />
          ))}
        </aside>
        <section className="flex min-w-0 flex-1 flex-col border border-[#999]">
          <div className="flex min-h-0 flex-1">
            <div className="relative flex-1 overflow-hidden bg-linear-to-b from-[#33383d] to-[#25282d] to-50%">
              <Drawing />
              <p className="absolute top-[3px] left-1 text-[9px] text-[#ddd]">[−] [自定义视图] [线框]</p>
              <ViewCube />
            </div>
            <div className="flex w-3 flex-col items-center bg-[#efefef] py-1">
              <Chevron dir="up" className="text-[#333]" />
              <span className="mt-[38px] h-[13px] w-[10px] bg-[#cacaca]" />
              <span className="flex-1" />
              <Chevron className="text-[#333]" />
            </div>
          </div>
          <LayoutTabs />
        </section>
        <aside className="relative w-[18px] overflow-hidden bg-[#ececec]">
          <div className="absolute inset-x-0 top-0">
            <SideGrip />
            {modifyTools.map((name) => (
              <ToolButton key={name} name={name} className="h-4 w-full" />
            ))}
            <div className="py-px">
              <SideGrip />
            </div>
            {["front", "back", "above", "under"].map((name) => (
              <ToolButton key={name} name={name} className="h-4 w-full" />
            ))}
            <hr className="mx-1 my-[2px] border-[#aaa]" />
            <ToolButton name="annofront" className="h-4 w-full" />
            <ToolButton name="above" className="h-4 w-full" />
          </div>
        </aside>
      </main>
      <div className="mt-[2px] flex h-[43px] border-t border-[#888] bg-[#a3a3a3] font-['DejaVu_Sans_Mono','Noto_Sans_CJK_SC',monospace] text-[9px] leading-[11px] text-[#1c1c1c]">
        <div className="flex w-3 flex-col items-center gap-px pt-[3px]">
          <span className="h-px w-[9px] bg-[#444]" />
          <span className="h-px w-[9px] bg-[#444]" />
        </div>
        <div className="flex min-w-0 flex-1 flex-col">
          <div className="flex-1 border-b border-[#aaa] bg-[#c7c7c7] pt-px pl-px">
            <p>命令:</p>
            <p>命令: _pointlight</p>
          </div>
          <label className="flex h-3 items-center bg-white pl-px">
            指定源位置 &lt;0,0,0&gt;:
            <input className="h-full flex-1 pl-1 outline-none" />
          </label>
        </div>
      </div>
      <StatusBar />
      <TaskBar />
      <div className="pointer-events-none absolute right-[200px] bottom-[22px] w-[34px] overflow-hidden font-['Inter',sans-serif] whitespace-nowrap text-white/80 drop-shadow-[0_0_1px_#999]">
        <p className="text-[42px] leading-11 font-bold">Ba</p>
        <p className="text-[20px] leading-5">jing</p>
      </div>
      <svg viewBox="0 0 32 14" className="absolute right-[127px] bottom-[93px] h-[14px] w-8" fill="#f6f6f6" stroke="#bbb" strokeWidth="0.800" aria-hidden="true">
        <ellipse cx="8" cy="8" rx="6" ry="7" />
        <ellipse cx="23" cy="9" rx="7" ry="7" />
      </svg>
      <Brand />
    </div>
  );
}
